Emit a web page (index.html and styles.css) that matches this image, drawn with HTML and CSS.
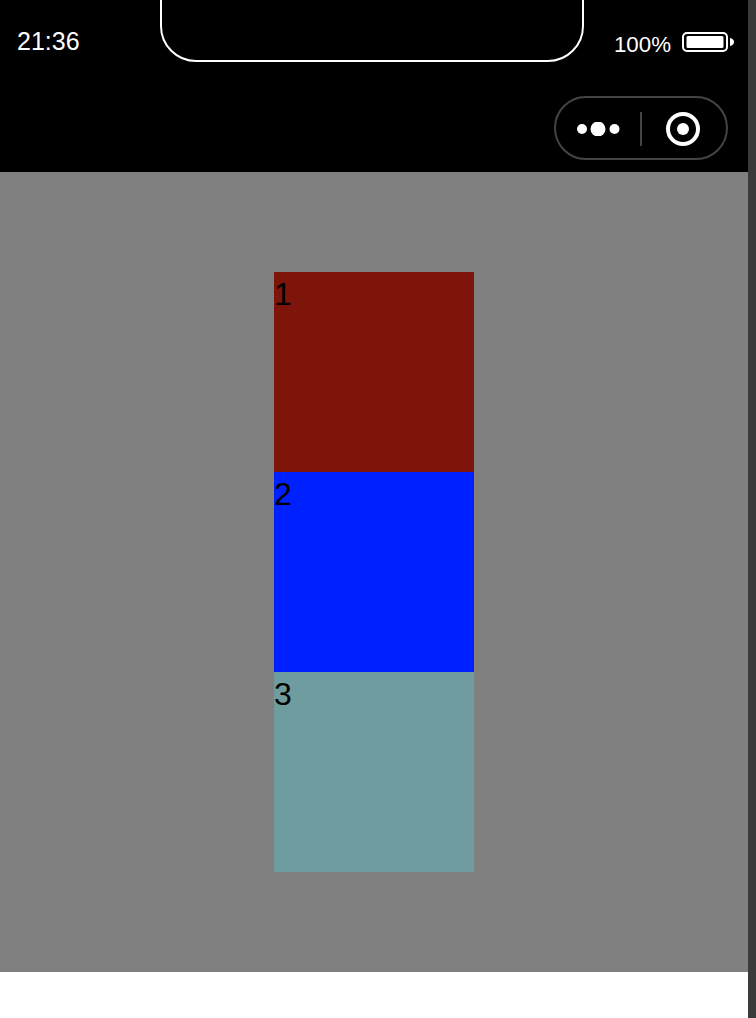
FILE: index.html
```html
<!DOCTYPE html>
<html lang="zh-CN">
<head>
  <meta charset="UTF-8">
  <title>flex</title>
  <link rel="stylesheet" href="styles.css">
</head>
<body>

  <div class="page">
    <div class="header">
      <!-- notch -->
      <div class="notch"></div>

      <div class="status">
        <span class="time">21:36</span>
        <div class="power">
          <span class="percent">100%</span>
          <svg class="battery" width="52" height="20" viewBox="0 0 52 20">
            <rect x="1" y="1" width="44" height="18" rx="4" fill="none" stroke="#fff" stroke-width="2"/>
            <rect x="4.500" y="4" width="37" height="12" rx="1.500" fill="#fff"/>
            <path d="M48 6c2.500 .4 4 2 4 4s-1.500 3.600-4 4z" fill="#fff"/>
          </svg>
        </div>
      </div>

      <div class="capsule">
        <svg class="dots" width="44" height="14" viewBox="0 0 44 14">
          <circle cx="5" cy="7" r="5" fill="#fff"/>
          <circle cx="21" cy="7" r="7.500" fill="#fff"/>
          <circle cx="37.500" cy="7" r="5" fill="#fff"/>
        </svg>
        <div class="divider"></div>
        <svg class="target" width="34" height="34" viewBox="0 0 34 34">
          <circle cx="17" cy="17" r="15" fill="none" stroke="#fff" stroke-width="4"/>
          <circle cx="17" cy="17" r="6" fill="#fff"/>
        </svg>
      </div>
    </div>

    <div class="content">
      <div class="box red">1</div>
      <div class="box blue">2</div>
      <div class="box teal">3</div>
    </div>
  </div>

  <div class="scrollbar"></div>

</body>
</html>
```

FILE: styles.css
```css
html, body { margin: 0; padding: 0; height: 100%; background: #fff; }
body {
  display: flex;
  height: 1018px;
  overflow: hidden;
  font-family: "Liberation Sans", Arial, sans-serif;
}
.page { width: 748px; }
.scrollbar { width: 8px; background: #3a3a3a; }

.header {
  position: relative;
  box-sizing: border-box;
  height: 172px;
  padding: 27px 20px 0 17px;
  background: #000;
  color: #fff;
}
.notch {
  position: absolute;
  top: -2px;
  left: 160px;
  width: 420px;
  height: 60px;
  border: 2px solid #fff;
  border-radius: 0 0 36px 36px;
}
.status {
  display: flex;
  justify-content: space-between;
  align-items: flex-start;
  height: 41px;
}
.time { font-size: 25px; line-height: 28px; }
.power {
  display: flex;
  align-items: flex-start;
  gap: 11px;
  margin-right: -6px;
}
.percent { font-size: 22.300px; line-height: 35px; }
.battery { margin-top: 5px; }

.capsule {
  display: flex;
  align-items: center;
  box-sizing: border-box;
  width: 174px;
  height: 64px;
  margin: 28px 0 0 auto;
  padding: 2px 0 0 21px;
  border: 2px solid #444;
  border-radius: 32px;
}
.divider {
  width: 2px;
  height: 34px;
  margin: 0 24px 0 19px;
  background: #444;
}

.content {
  display: flex;
  flex-direction: column;
  align-items: center;
  height: 800px;
  padding-top: 100px;
  box-sizing: border-box;
  background: #808080;
}
.box {
  width: 200px;
  height: 200px;
  font-size: 32px;
  line-height: 45px;
  color: #000;
}
.red { background: #7e150b; }
.blue { background: #0021ff; }
.teal { background: #6e9c9f; }
```
